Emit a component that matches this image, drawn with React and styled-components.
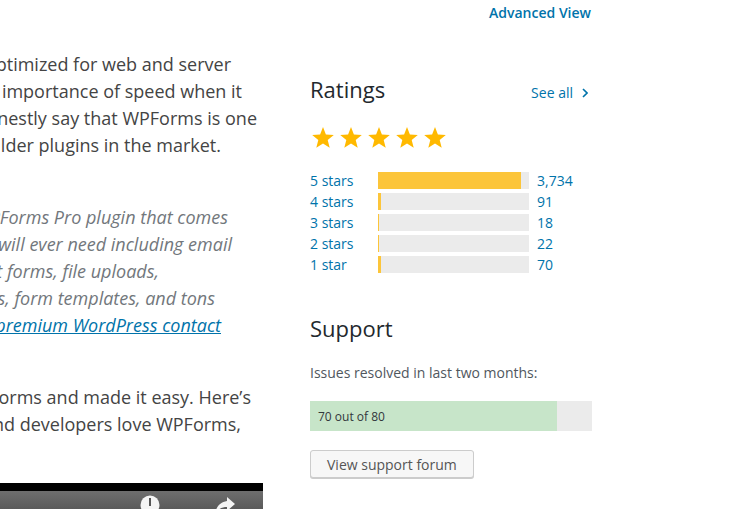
import React from "react";
import styled, { createGlobalStyle } from "styled-components";

const Global = createGlobalStyle`
  html, body { margin: 0; padding: 0; background: #fff; }
  body { font-family: "Open Sans", "Noto Sans", sans-serif; }
`;

const Page = styled.div`
  display: flex;
  align-items: flex-start;
  width: 750px;
  height: 509px;
  overflow: hidden;
`;

const LeftCol = styled.div`
  width: 263px;
  flex-shrink: 0;
  overflow: hidden;
  height: 509px;
`;

const Para = styled.div`
  margin: ${(p) => (p.$first ? "-25px 0 49px" : "0 0 45px")};
  font-size: 18px;
  line-height: 27px;
  color: ${(p) => (p.$italic ? "#72777c" : "#444")};
  font-style: ${(p) => (p.$italic ? "italic" : "normal")};
`;

const Line = styled.div`
  display: flex;
  justify-content: flex-end;
  white-space: nowrap;
  padding-right: ${(p) => p.$end}px;
  & > span { flex-shrink: 0; }
`;

const TextLink = styled.a`
  color: #0073aa;
  text-decoration: underline;
`;

const Video = styled.div`
  width: 263px;
  height: 40px;
  background: #000;
  padding-top: 8px;
  box-sizing: border-box;
`;

const VideoBar = styled.div`
  display: flex;
  justify-content: flex-end;
  align-items: flex-start;
  gap: 55px;
  height: 32px;
  padding: 4px 28px 0 0;
  box-sizing: border-box;
  background: linear-gradient(#6e6e6e, #4a4a4a);
`;

const RightCol = styled.div`
  width: 282px;
  margin-left: 47px;
  flex-shrink: 0;
  display: flex;
  flex-direction: column;
`;

const AdvLink = styled.a`
  align-self: flex-end;
  margin: 3px 1px 0 0;
  font-size: 14px;
  line-height: 20px;
  font-weight: 600;
  color: #0073aa;
  text-decoration: none;
`;

const SectionHead = styled.div`
  display: flex;
  justify-content: space-between;
  align-items: baseline;
  margin-top: ${(p) => p.$mt}px;
`;

const Heading = styled.h2`
  margin: 0;
  font-size: 22px;
  line-height: 30px;
  font-weight: 400;
  color: #23282d;
`;

const SeeAll = styled.a`
  display: flex;
  align-items: center;
  gap: 9px;
  margin-right: 4px;
  font-size: 14px;
  color: #0073aa;
  text-decoration: none;
`;

const Stars = styled.div`
  display: flex;
  gap: 4px;
  margin: 22px 0 0 1px;
`;

const Rows = styled.div`
  display: flex;
  flex-direction: column;
  gap: 4px;
  margin-top: 22px;
`;

const Row = styled.div`
  display: grid;
  grid-template-columns: 60px 151px auto;
  column-gap: 8px;
  align-items: center;
  height: 17px;
  font-size: 14px;
  line-height: 17px;
  color: #0073aa;
`;

const Track = styled.div`
  height: 17px;
  background: #ebebeb;
  display: flex;
`;

const Fill = styled.div`
  height: 100%;
  background: #fcc53a;
`;

const Note = styled.p`
  margin: 20px 0 0;
  font-size: 14px;
  line-height: 20px;
  color: #50575e;
`;

const Progress = styled.div`
  margin-top: 18px;
  height: 30px;
  background: #ebebeb;
  display: flex;
`;

const ProgressFill = styled.div`
  background: #c7e5c9;
  display: flex;
  align-items: center;
  padding-left: 8px;
  box-sizing: border-box;
  font-size: 12px;
  color: #32373c;
  white-space: nowrap;
`;

const Button = styled.button`
  align-self: flex-start;
  margin-top: 19px;
  height: 28px;
  padding: 0 16px;
  font-family: "Open Sans", sans-serif;
  font-size: 14px;
  color: #555;
  background: #f7f7f7;
  border: 1px solid #ccc;
  border-radius: 3px;
  box-shadow: 0 1px 0 #ccc;
  cursor: pointer;
`;

const Star = () => (
  <svg width="24" height="24" viewBox="0 0 24 24">
    <polygon
      fill="#ffb900"
      points="12,1 14.9,8.4 22.8,8.9 16.7,14 18.7,21.8 12,17.5 5.3,21.8 7.3,14 1.2,8.9 9.1,8.4"
    />
  </svg>
);

const ratings = [
  { label: "5 stars", count: 3734 },
  { label: "4 stars", count: 91 },
  { label: "3 stars", count: 18 },
  { label: "2 stars", count: 22 },
  { label: "1 star", count: 70 },
];
const total = ratings.reduce((s, r) => s + r.count, 0);

export default function App() {
  return (
    <>
      <Global />
      <Page>
        <LeftCol>
          <Para $first>
            <Line $end={4}>
              <span>Drag &amp; drop builder for all types of forms (contact, survey, signup, popup)</span>
            </Line>
          </Para>
          <Para>
            <Line $end={32}><span>WPForms is also 100% optimized for web and server</span></Line>
            <Line $end={21}><span>performance. We understand the importance of speed when it</span></Line>
            <Line $end={6}><span>comes to your website, so we can honestly say that WPForms is one</span></Line>
            <Line $end={42}><span>of the fastest WordPress form builder plugins in the market.</span></Line>
          </Para>
          <Para $italic>
            <Line $end={35}><span>This plugin is a lite version of the WPForms Pro plugin that comes</span></Line>
            <Line $end={31}><span>with all the form fields and features you will ever need including email</span></Line>
            <Line $end={104}><span>marketing integrations, payments, smart forms, file uploads,</span></Line>
            <Line $end={48}><span>conditional logic, custom notifications, form templates, and tons</span></Line>
            <Line $end={42}>
              <span>of other powerful features, making it the best <TextLink href="#">premium WordPress contact</TextLink></span>
            </Line>
          </Para>
          <Para>
            <Line $end={12}><span>We have taken the pain out of creating online forms and made it easy. Here’s</span></Line>
            <Line $end={22}><span>why smart business owners, designers, and developers love WPForms,</span></Line>
          </Para>
          <Video>
            <VideoBar>
              <svg width="20" height="20" viewBox="0 0 20 20">
                <circle cx="10" cy="10" r="9.5" fill="#f4f4f4" />
                <rect x="9" y="3" width="2" height="8" fill="#555" />
              </svg>
              <svg width="20" height="20" viewBox="0 0 20 20">
                <path d="M12 2 L20 9 L12 16 L12 12 C7 12 3 14 0 19 C1 12 5 7 12 6 Z" fill="#f4f4f4" />
              </svg>
            </VideoBar>
          </Video>
        </LeftCol>

        <RightCol>
          <AdvLink href="#">Advanced View</AdvLink>

          <SectionHead $mt={51}>
            <Heading>Ratings</Heading>
            <SeeAll href="#">
              See all
              <svg width="6" height="10" viewBox="0 0 6 10">
                <polyline points="1,1 5,5 1,9" fill="none" stroke="#0073aa" strokeWidth="1.6" />
              </svg>
            </SeeAll>
          </SectionHead>

          <Stars>
            {[0, 1, 2, 3, 4].map((i) => (
              <Star key={i} />
            ))}
          </Stars>

          <Rows>
            {ratings.map((r) => (
              <Row key={r.label}>
                <span>{r.label}</span>
                <Track>
                  <Fill style={{ width: `${(r.count / total) * 100}%` }} />
                </Track>
                <span>{r.count.toLocaleString("en-US")}</span>
              </Row>
            ))}
          </Rows>

          <SectionHead $mt={40}>
            <Heading>Support</Heading>
          </SectionHead>
          <Note>Issues resolved in last two months:</Note>
          <Progress>
            <ProgressFill style={{ width: `${(70 / 80) * 100}%` }}>70 out of 80</ProgressFill>
          </Progress>
          <Button>View support forum</Button>
        </RightCol>
      </Page>
    </>
  );
}
